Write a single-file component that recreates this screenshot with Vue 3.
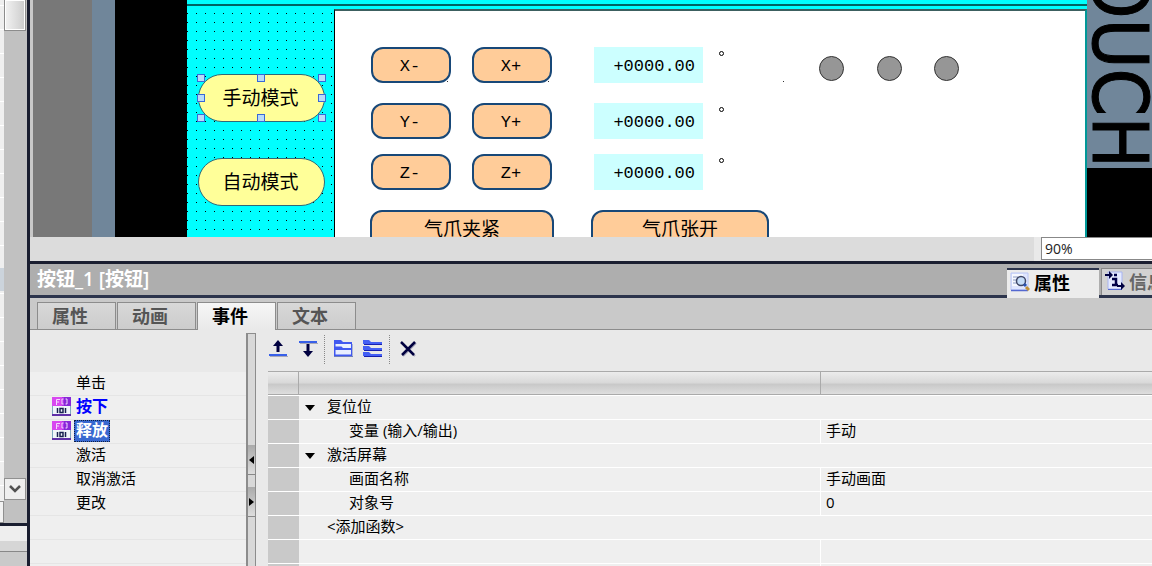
<script setup>
import { ref } from 'vue'

const zoom = ref('90%')
const axes = ['X', 'Y', 'Z']
const handles = ['nw', 'n', 'ne', 'w', 'e', 'sw', 's', 'se']
const tabs = ['属性', '动画', '事件', '文本']
const activeTab = ref('事件')
const events = [
  { name: '单击' },
  { name: '按下', bound: true },
  { name: '释放', bound: true, selected: true },
  { name: '激活' },
  { name: '取消激活' },
  { name: '更改' },
]
const rows = [
  { label: '复位位', group: true },
  { label: '变量 (输入/输出)', value: '手动' },
  { label: '激活屏幕', group: true },
  { label: '画面名称', value: '手动画面' },
  { label: '对象号', value: '0' },
  { label: '<添加函数>', add: true },
  { label: '', value: '' },
  { label: '', value: '' },
]
</script>

<template>
  <div class="app">
    <aside class="side">
      <div class="side-top">
        <div class="grid-edge"><div class="edge-cell"></div><div class="edge-knob"></div></div>
        <div class="scroll">
          <div class="thumb"></div>
          <button class="down" aria-label="向下滚动">
            <svg width="12" height="8" viewBox="0 0 12 8"><path d="M1 1l5 5 5-5" fill="none" stroke="#505050" stroke-width="2.5" /></svg>
          </button>
        </div>
      </div>
      <div class="side-bar"></div>
      <div class="side-rest"></div>
    </aside>

    <main class="main">
      <section class="viewport">
        <div class="bezel-gray"></div>
        <div class="bezel-slate"></div>
        <div class="bezel-black"></div>
        <div class="screen">
          <div class="topline"></div>
          <div class="panel"></div>
          <button class="mode manual">手动模式
            <i v-for="h in handles" :key="h" class="handle" :class="h"></i>
          </button>
          <button class="mode auto">自动模式</button>
          <template v-for="a in axes" :key="a">
            <button class="jog minus" :class="'row' + a">{{ a }}-</button>
            <button class="jog plus" :class="'row' + a">{{ a }}+</button>
            <input class="field" :class="'row' + a" :aria-label="a" value="+0000.00" readonly />
            <span class="deg" :class="'row' + a"></span>
          </template>
          <button class="jog grip clamp">气爪夹紧</button>
          <button class="jog grip open">气爪张开</button>
          <span class="speck s1"></span>
          <span class="speck s2"></span>
          <span class="speck s3"></span>
          <span class="lamp l1"></span>
          <span class="lamp l2"></span>
          <span class="lamp l3"></span>
        </div>
        <div class="brand">
          <div class="brand-face"><span class="brand-text">TOUCH</span></div>
        </div>
      </section>

      <div class="status">
        <div class="hscroll"></div>
        <input v-model="zoom" class="zoom" aria-label="缩放" />
      </div>

      <header class="title">
        <h1>按钮_1 [按钮]</h1>
        <div class="views">
          <button class="view on">
            <svg width="20" height="20" viewBox="0 0 20 20">
              <path d="M1 1h17v17H1z" fill="#dfe6ff" stroke="#b8c4f4" />
              <path d="M2 2h11v12H2z" fill="#f6f8ff" />
              <path d="M1 18.500h17" stroke="#5468d0" stroke-width="1.500" />
              <path d="M3 5h5M3 8h3M3 11h4" stroke="#8898c0" />
              <circle cx="11" cy="9" r="4.500" fill="#c4dcf8" stroke="#404868" stroke-width="1.500" />
              <path d="M14 12l2 2" stroke="#2850b0" stroke-width="3" />
              <path d="M16 15l3 3" stroke="#c09038" stroke-width="3" />
            </svg>
            属性
          </button>
          <button class="view">
            <svg width="20" height="20" viewBox="0 0 20 20">
              <path d="M3 1h14v17H3z" fill="#e4eaff" stroke="#a8b4f0" />
              <path d="M3 18.500h14" stroke="#5468d0" />
              <path d="M0 4h5M12 15h5" stroke="#000040" stroke-width="2" />
              <path d="M4 0l4 4-4 4zM16 11l4 4-4 4z" fill="#000040" />
              <path d="M9 4h3M7 8h4v6M7 14h6" fill="none" stroke="#000048" stroke-width="2.500" />
            </svg>
            信息
          </button>
        </div>
      </header>

      <nav class="tabs">
        <button v-for="t in tabs" :key="t" class="tab" :class="{ on: t === activeTab }" @click="activeTab = t">{{ t }}</button>
      </nav>

      <section class="body">
        <div class="events">
          <button v-for="e in events" :key="e.name" class="event" :class="{ bound: e.bound, selected: e.selected }">
            <span class="event-icon">
              <svg v-if="e.bound" width="19" height="19" viewBox="0 0 19 19">
                <path d="M0 0h19v9H0z" fill="#b030e8" />
                <path d="M0 0h10v9H0z" fill="#d848f0" />
                <path d="M12 0h7v9h-7z" fill="#8828d8" />
                <path d="M0 9h19v9H0z" fill="#f0f6fa" />
                <path d="M.5 9v9M18.500 9v9" stroke="#80a8c0" />
                <path d="M0 18h19" stroke="#6030a8" stroke-width="2" />
                <path d="M4.500 8V2.500H8M4.500 5H7M11.500 2H10v5h1.500M13.500 2H15v5h-1.500" fill="none" stroke="#f4d8ff" />
                <path d="M5.500 11v5M13.500 11v5M8 11.500h3v4H8z" fill="none" stroke="#182050" stroke-width="1.500" />
              </svg>
            </span>
            <span class="event-name">{{ e.name }}</span>
          </button>
        </div>

        <div class="splitter">
          <button aria-label="折叠"><svg width="5" height="8" viewBox="0 0 5 8"><path d="M5 0v8L0 4z" /></svg></button>
          <button aria-label="展开"><svg width="5" height="8" viewBox="0 0 5 8"><path d="M0 0v8l5-4z" /></svg></button>
        </div>

        <div class="functions">
          <div class="tools">
            <button aria-label="上移"><svg width="20" height="20" viewBox="0 0 20 20"><path d="M2 17.500h18" stroke="#a8a8b8" /><path d="M1 16h18" stroke="#3860e8" stroke-width="2" /><path d="M10 13V6" stroke="#000040" stroke-width="3" /><path d="M10 1l5 6H5z" fill="#000040" /></svg></button>
            <button aria-label="下移"><svg width="20" height="20" viewBox="0 0 20 20"><path d="M2 4.500h18" stroke="#a8a8b8" /><path d="M1 3h18" stroke="#3860e8" stroke-width="2" /><path d="M10 5v8" stroke="#000040" stroke-width="3" /><path d="M10 18l5-6H5z" fill="#000040" /></svg></button>
            <span class="sep"></span>
            <button aria-label="展开全部"><svg width="20" height="20" viewBox="0 0 20 20"><path d="M1 1h7l2 2h9v14H1z" fill="#4058f0" /><path d="M2.500 5H18v4h-8L8.500 7.500h-6zM2.500 11H18v4.500H2.500z" fill="#e8eeff" /><path d="M1 17.500h19V5" fill="none" stroke="#7080b8" /></svg></button>
            <button aria-label="折叠全部"><svg width="20" height="20" viewBox="0 0 20 20"><path d="M0 1h6l2 2h11v2H0zM0 7h6l2 2h11v2H0zM0 13h6l2 2h11v2H0z" fill="#4460f4" /><path d="M1 5.500h18M1 11.500h18M1 17.500h18" stroke="#1820b0" /></svg></button>
            <span class="sep"></span>
            <button aria-label="删除"><svg width="20" height="20" viewBox="0 0 20 20"><path d="M4 4l13 13M18 4L5 17" stroke="#a8a8bc" stroke-width="2" /><path d="M3 3l13 13M17 3L4 16" stroke="#000040" stroke-width="2.500" /></svg></button>
          </div>
          <table class="table">
            <colgroup><col class="c1" /><col class="c2" /><col /></colgroup>
            <thead><tr><th></th><th></th><th></th></tr></thead>
            <tbody>
              <tr v-for="(r, i) in rows" :key="i">
                <td class="mark"></td>
                <td v-if="r.group || r.add" colspan="2" class="wide">
                  <span class="arrow"><svg v-if="r.group" width="10" height="6" viewBox="0 0 10 6"><path d="M0 0h10L5 6z" /></svg></span>{{ r.label }}
                </td>
                <template v-else>
                  <td class="name">{{ r.label }}</td>
                  <td class="value">{{ r.value }}</td>
                </template>
              </tr>
            </tbody>
          </table>
        </div>
      </section>
    </main>
  </div>
</template>

<style>
body { margin: 0; overflow: hidden; }
</style>

<style scoped>
.app, .app * { box-sizing: border-box; }
.app { display: flex; height: 100vh; overflow: hidden; background: #e9e9e9; color: #000; font: 15px/24px "Open Sans", "Noto Sans CJK SC", sans-serif; }
button { padding: 0; border: 0; background: none; font: inherit; color: inherit; white-space: nowrap; }
svg { display: block; flex: none; }

.side { flex: none; width: 30px; border-right: 3px solid #1a1e30; display: flex; flex-direction: column; background: #c1c1c1; }
.side-top { flex: 1; display: flex; }
.grid-edge { width: 4px; padding-top: 268px; background: repeating-linear-gradient(#efefef 0 5px, #fff 5px 6px, #efefef 6px 24px); display: flex; flex-direction: column; justify-content: space-between; }
.edge-cell { height: 23px; background: #ccd4dc; }
.edge-knob { height: 22px; background: #f2f2f2; border: 1px solid #909090; border-left: 0; }
.scroll { flex: 1; display: flex; flex-direction: column; justify-content: space-between; padding: 0 1px 23px 0; }
.thumb { height: 31px; border: 1px solid #8c8c8c; border-top: 0; box-shadow: inset 0 0 0 1px #fff; background: linear-gradient(90deg, #f2f2f2, #ccc); }
.down { height: 22px; border: 1px solid #909090; background: #eee; display: flex; align-items: center; justify-content: center; }
.side-bar { height: 29px; border-top: 3px solid #1a1e30; border-bottom: 1px solid #888; background: linear-gradient(#eee 60%, #d6d6d6 60%); }
.side-rest { height: 14px; background: #cacaca; }

.main { flex: 1; min-width: 0; display: flex; flex-direction: column; }
.viewport { flex: none; height: 237px; display: flex; overflow: hidden; border-left: 3px solid #c8c8c8; }
.bezel-gray { flex: none; width: 59px; background: #787878; }
.bezel-slate { flex: none; width: 23px; background: #70869a; }
.bezel-black { flex: none; width: 72px; background: #000; }
.screen { position: relative; flex: none; width: 900px; height: 480px; background: conic-gradient(from 270deg at 1px 1px, #000 90deg, #0ff 0) 0 4px / 9px 9px; font: 19px/24px "Noto Sans CJK SC", sans-serif; }
.topline { position: absolute; left: 0; right: 0; top: 4px; height: 5px; background: #0ff; border-top: 2px solid #006464; }
.panel { position: absolute; left: 147px; right: 0; top: 9px; bottom: 0; background: #fff; border: 1px solid #000; border-top: 2px solid #3c6060; border-right: 2px solid #009898; }
.mode { position: absolute; left: 11px; width: 127px; height: 48px; padding: 0 2px 3px 0; border: 1px solid #306878; border-radius: 24px; background: #ffff99; }
.manual { top: 74px; }
.auto { top: 158px; }
.handle { position: absolute; width: 8px; height: 8px; background: #b8dcf8; border: 1px solid #3868d8; }
.nw, .n, .ne { top: -1px; }
.w, .e { top: 19px; }
.sw, .s, .se { bottom: -1px; }
.nw, .w, .sw { left: -2px; }
.n, .s { left: 58px; }
.ne, .e, .se { right: -2px; }
.jog { position: absolute; width: 80px; height: 36px; border: 2px solid #184878; border-radius: 12px; background: #ffcc99; font: 17px/20px "Liberation Mono", monospace; }
.minus { left: 184px; }
.plus { left: 285px; }
.minus, .plus { padding: 3px 2px 0 0; }
.rowX { top: 47px; }
.rowY { top: 103px; }
.rowZ { top: 154px; }
.grip { top: 210px; height: 38px; padding-bottom: 2px; font: 19px/24px "Noto Sans CJK SC", sans-serif; }
.clamp { left: 183px; width: 184px; }
.open { left: 404px; width: 178px; }
.field { position: absolute; left: 407px; width: 109px; height: 36px; padding: 3px 8px 0; border: 0; background: #ccffff; font: 17px/20px "Liberation Mono", monospace; text-align: right; color: #000; }
.deg { position: absolute; left: 532px; width: 5px; height: 5px; margin-top: 4px; border: 1px solid #000; border-radius: 50%; }
.speck { position: absolute; top: 81px; width: 1px; height: 1px; background: #333; }
.s1 { left: 260px; }
.s2 { left: 361px; }
.s3 { left: 596px; }
.lamp { position: absolute; top: 56px; width: 25px; height: 25px; border: 1px solid #333; border-radius: 50%; background: #969696; }
.l1 { left: 632px; }
.l2 { left: 690px; }
.l3 { left: 747px; }
.brand { flex: 1; min-width: 0; background: #000; overflow: hidden; }
.brand-face { height: 168px; background: #70869a; display: flex; align-items: flex-end; overflow: hidden; }
.brand-text { writing-mode: vertical-rl; font: 76px/65px "Liberation Sans Narrow", "DejaVu Sans Condensed", sans-serif; -webkit-text-stroke: 1px #000; }

.status { flex: none; height: 24px; display: flex; background: #e9e9e9; }
.hscroll { flex: 1; background: #dcdcdc; margin-right: 7px; }
.zoom { width: 111px; height: 23px; padding: 0 3px; border: 1px solid #888; border-right: 0; background: #fff; font: 14px/20px "Open Sans", sans-serif; color: #222; }

.title { flex: none; height: 37px; display: flex; justify-content: space-between; border-top: 3px solid #1a1e30; background: linear-gradient(#aeaeae 0 31px, #2c344c 31px); }
h1 { margin: 0; padding-left: 7px; font: 600 19px/30px "Open Sans", "Noto Sans CJK SC", sans-serif; color: #fff; white-space: nowrap; }
.views { width: 145px; display: flex; gap: 2px; padding-top: 4px; overflow: hidden; }
.view { flex: none; width: 92px; height: 27px; display: flex; align-items: center; gap: 4px; padding: 0 0 2px 3px; font: bold 18px/24px "Noto Sans CJK SC", sans-serif; color: #666; border: 1px solid #888; border-bottom: 0; background: #d2d2d2; }
.view.on { height: 30px; padding-bottom: 5px; border: 0; border-top: 2px solid #2c344c; background: #ececec; color: #000; }

.tabs { flex: none; height: 32px; display: flex; gap: 1px; padding: 4px 7px 0; background: #c9c9c9; border-bottom: 1px solid #8c8c8c; }
.tab { width: 79px; height: 27px; padding: 0 13px 3px 0; border: 1px solid #8c8c8c; border-bottom: 0; background: linear-gradient(#d8d8d8, #ccc); font: bold 18px/22px "Noto Sans CJK SC", sans-serif; color: #555; }
.tab.on { height: 28px; padding-bottom: 4px; background: linear-gradient(#f6f6f6, #e9e9e9); color: #000; }

.body { flex: 1; min-height: 0; display: flex; overflow: hidden; }
.events { flex: none; width: 216px; padding: 0 1px 0 3px; margin-top: 42px; display: flex; flex-direction: column; background: repeating-linear-gradient(#efefef 0 23px, #e5e5e5 23px 24px); }
.event { height: 24px; display: flex; align-items: flex-start; padding-left: 19px; }
.event-icon { width: 22px; padding-top: 1px; }
.event-name { height: 22px; line-height: 19px; padding: 0 1px; border: 1px solid transparent; }
.bound { font-weight: bold; color: #00f; }
.bound .event-name { font-size: 16px; }
.selected .event-name { background: #3868d0; color: #fff; border: 1px dotted #102040; }
.splitter { flex: none; width: 10px; margin-top: 3px; padding-top: 111px; border: 1px solid #8c8c8c; border-left-width: 2px; border-bottom: 0; background: #d8d8d8; display: flex; flex-direction: column; gap: 12px; }
.splitter button { height: 30px; display: flex; align-items: center; justify-content: center; border-bottom: 1px solid #888; background: linear-gradient(#aaa, #ddd); }
.functions { flex: 1; min-width: 0; padding-left: 12px; }
.tools { height: 41px; display: flex; align-items: center; gap: 10px; padding-bottom: 3px; }
.tools button { width: 20px; height: 20px; }
.sep { width: 0; height: 29px; margin: 0 -2px 0 -4px; border-left: 1px dotted #888; }
.table { width: 100%; table-layout: fixed; border-collapse: separate; border-spacing: 0; }
.c1 { width: 31px; }
.c2 { width: 522px; }
th { height: 24px; padding: 0; border: 1px solid #aaa; border-left: 0; border-width: 1px 1px 1px 0; background: linear-gradient(#ececec, #d8d8d8 50%, #c8c8c8 55%, #dedede); }
th:last-child { border-right: 0; }
td { height: 24px; padding: 0 0 3px; line-height: 20px; border-top: 1px solid #fff; background: #efefef; white-space: nowrap; }
.mark { background: #c9c9c9; }
.name { padding-left: 50px; border-right: 1px solid #fff; }
.value { padding-left: 5px; }
.arrow { display: inline-block; width: 22px; margin-left: 6px; vertical-align: middle; }
</style>
